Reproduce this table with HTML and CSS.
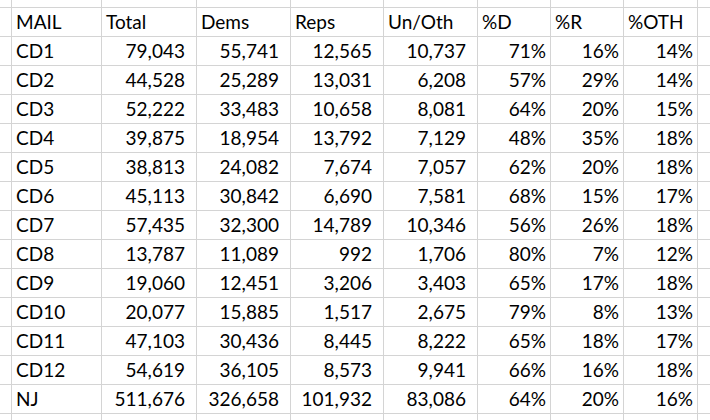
FILE: index.html
```html
<!DOCTYPE html>
<html>
<head>
<meta charset="utf-8">
<link rel="stylesheet" href="styles.css">
</head>
<body>
<div class="sheet">
  <div class="row edge"><div></div><div></div><div></div><div></div><div></div><div></div><div></div><div></div><div></div><div></div></div>
  <div class="row"><div></div><div class="t">MAIL</div><div class="t">Total</div><div class="t">Dems</div><div class="t">Reps</div><div class="t">Un/Oth</div><div class="t">%D</div><div class="t">%R</div><div class="t">%OTH</div><div></div></div>
  <div class="row"><div></div><div class="t">CD1</div><div class="n">79,043</div><div class="n">55,741</div><div class="n">12,565</div><div class="n">10,737</div><div class="p">71%</div><div class="p">16%</div><div class="p">14%</div><div></div></div>
  <div class="row"><div></div><div class="t">CD2</div><div class="n">44,528</div><div class="n">25,289</div><div class="n">13,031</div><div class="n">6,208</div><div class="p">57%</div><div class="p">29%</div><div class="p">14%</div><div></div></div>
  <div class="row"><div></div><div class="t">CD3</div><div class="n">52,222</div><div class="n">33,483</div><div class="n">10,658</div><div class="n">8,081</div><div class="p">64%</div><div class="p">20%</div><div class="p">15%</div><div></div></div>
  <div class="row"><div></div><div class="t">CD4</div><div class="n">39,875</div><div class="n">18,954</div><div class="n">13,792</div><div class="n">7,129</div><div class="p">48%</div><div class="p">35%</div><div class="p">18%</div><div></div></div>
  <div class="row"><div></div><div class="t">CD5</div><div class="n">38,813</div><div class="n">24,082</div><div class="n">7,674</div><div class="n">7,057</div><div class="p">62%</div><div class="p">20%</div><div class="p">18%</div><div></div></div>
  <div class="row"><div></div><div class="t">CD6</div><div class="n">45,113</div><div class="n">30,842</div><div class="n">6,690</div><div class="n">7,581</div><div class="p">68%</div><div class="p">15%</div><div class="p">17%</div><div></div></div>
  <div class="row"><div></div><div class="t">CD7</div><div class="n">57,435</div><div class="n">32,300</div><div class="n">14,789</div><div class="n">10,346</div><div class="p">56%</div><div class="p">26%</div><div class="p">18%</div><div></div></div>
  <div class="row"><div></div><div class="t">CD8</div><div class="n">13,787</div><div class="n">11,089</div><div class="n">992</div><div class="n">1,706</div><div class="p">80%</div><div class="p">7%</div><div class="p">12%</div><div></div></div>
  <div class="row"><div></div><div class="t">CD9</div><div class="n">19,060</div><div class="n">12,451</div><div class="n">3,206</div><div class="n">3,403</div><div class="p">65%</div><div class="p">17%</div><div class="p">18%</div><div></div></div>
  <div class="row"><div></div><div class="t">CD10</div><div class="n">20,077</div><div class="n">15,885</div><div class="n">1,517</div><div class="n">2,675</div><div class="p">79%</div><div class="p">8%</div><div class="p">13%</div><div></div></div>
  <div class="row"><div></div><div class="t">CD11</div><div class="n">47,103</div><div class="n">30,436</div><div class="n">8,445</div><div class="n">8,222</div><div class="p">65%</div><div class="p">18%</div><div class="p">17%</div><div></div></div>
  <div class="row"><div></div><div class="t">CD12</div><div class="n">54,619</div><div class="n">36,105</div><div class="n">8,573</div><div class="n">9,941</div><div class="p">66%</div><div class="p">16%</div><div class="p">18%</div><div></div></div>
  <div class="row"><div></div><div class="t">NJ</div><div class="n">511,676</div><div class="n">326,658</div><div class="n">101,932</div><div class="n">83,086</div><div class="p">64%</div><div class="p">20%</div><div class="p">16%</div><div></div></div>
  <div class="row edge"><div></div><div></div><div></div><div></div><div></div><div></div><div></div><div></div><div></div><div></div></div>
</div>
</body>
</html>
```
FILE: styles.css
```css
html, body {
  margin: 0;
  padding: 0;
  background: #ffffff;
  overflow: hidden;
}
.sheet {
  display: flex;
  flex-direction: column;
  gap: 1px;
  background: #d4d4d4;
  width: 710px;
  height: 420px;
  overflow: hidden;
}
.row {
  display: grid;
  grid-template-columns: 11px 89px 94px 93px 92px 93px 72px 72px 73px 1fr;
  gap: 1px;
  height: 28px;
  flex: none;
}
.row.edge {
  height: 7px;
}
.row:last-child {
  height: 20px;
}
.row > div {
  background: #ffffff;
  font-family: Lato, "Noto Sans", sans-serif;
  font-size: 19px;
  line-height: 28px;
  color: #000000;
  white-space: nowrap;
  overflow: hidden;
}
.t {
  padding-left: 4px;
  text-align: left;
}
.n {
  padding-right: 11px;
  text-align: right;
}
.p {
  padding-right: 4px;
  text-align: right;
}
```
